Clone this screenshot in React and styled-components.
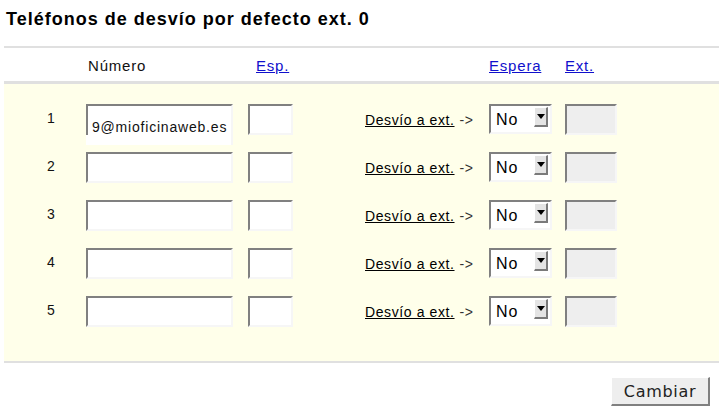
import React from 'react';
import styled, { createGlobalStyle } from 'styled-components';

const GlobalStyle = createGlobalStyle`
    body {
        margin: 0;
        background: #fff;
        font-family: "Liberation Sans", Arial, sans-serif;
        color: #111;
    }
`;

const Page = styled.div`
    width: 715px;
    padding-left: 4px;
`;

const Title = styled.h1`
    margin: 0;
    padding: 8px 0 0 2px;
    height: 46px;
    box-sizing: border-box;
    font-size: 18px;
    font-weight: bold;
    letter-spacing: 1px;
    line-height: 22px;
    color: #000;
`;

const Grid = styled.div`
    display: grid;
    grid-template-columns: 82px 162px 117px 124px 76px 52px;
    align-items: center;
`;

const HeaderRow = styled(Grid)`
    border-top: 2px solid #e0e0e0;
    border-bottom: 3px solid #e0e0e0;
    height: 31px;
    padding-top: 2px;
    font-size: 15px;
    letter-spacing: 0.8px;
`;

const HeadCell = styled.div`
    padding-left: ${p => p.$indent || 0}px;
`;

const HeadLink = styled.a`
    color: #1010cc;
    text-decoration: underline;
    cursor: pointer;
`;

const Body = styled(Grid)`
    background: #ffffea;
    padding: 20px 0 34px;
    grid-auto-rows: 31px;
    row-gap: 17px;
    align-items: start;
    border-bottom: 2px solid #e0e0e0;
`;

const Num = styled.div`
    align-self: center;
    padding-left: 12px;
    text-align: center;
    font-size: 14px;
    margin-top: -3px;
`;

const TextInput = styled.input`
    box-sizing: border-box;
    width: ${p => p.$w}px;
    height: ${p => (p.$tall ? 41 : 31)}px;
    margin: 0;
    padding: 0 4px;
    font-family: "Liberation Sans", Arial, sans-serif;
    font-size: 14px;
    letter-spacing: 0.8px;
    color: #111;
    background: ${p => (p.disabled ? '#eeeeee' : '#fff')};
    border-style: solid;
    border-width: 2px;
    border-color: #808080 #f6f6f6 #f6f6f6 #808080;
    outline: none;
    ${p => p.$tall && `
        border-left: none;
        border-bottom: none;
        padding-left: 6px;
        padding-top: 2px;
        background: linear-gradient(#808080, #808080) left top / 2px 29px no-repeat, #fff;
    `}
`;

const Desvio = styled.div`
    align-self: center;
    font-size: 14px;
    letter-spacing: 0.6px;
    white-space: nowrap;
    color: #333;
`;

const DesvioLink = styled.a`
    color: #000;
    text-decoration: underline;
    margin-right: 5px;
    cursor: pointer;
`;

const SelectBox = styled.div`
    position: relative;
    box-sizing: border-box;
    width: 63px;
    height: 30px;
    background: #fff;
    border-style: solid;
    border-width: 2px;
    border-color: #808080 #f6f6f6 #f6f6f6 #808080;
`;

const Select = styled.select`
    appearance: none;
    width: 100%;
    height: 100%;
    border: none;
    background: transparent;
    padding: 0 0 0 5px;
    margin: 0;
    font-family: "Liberation Sans", Arial, sans-serif;
    font-size: 16px;
    letter-spacing: 1px;
    color: #000;
    outline: none;
`;

const Arrow = styled.span`
    position: absolute;
    right: 2px;
    top: 1px;
    width: 14px;
    height: 20px;
    box-sizing: border-box;
    background: #e4e4e4;
    border-style: solid;
    border-width: 1px 2px 2px 1px;
    border-color: #fff #7a7a7a #7a7a7a #fff;
    display: flex;
    align-items: center;
    justify-content: center;
    pointer-events: none;
`;

const Footer = styled.div`
    display: flex;
    justify-content: flex-end;
    padding: 14px 9px 0 0;
`;

const Button = styled.button`
    width: 99px;
    height: 29px;
    margin: 0;
    background: #eeeeee;
    border-style: solid;
    border-width: 1px 2px 2px 1px;
    border-color: #fff #808080 #808080 #fff;
    font-family: "DejaVu Sans", sans-serif;
    font-size: 16px;
    letter-spacing: 0.7px;
    color: #222;
    cursor: pointer;
`;

const rows = [
    { n: 1, numero: '9@mioficinaweb.es' },
    { n: 2, numero: '' },
    { n: 3, numero: '' },
    { n: 4, numero: '' },
    { n: 5, numero: '' },
];

const App = () => {
    return (
        <>
            <GlobalStyle />
            <Page>
                <Title>Teléfonos de desvío por defecto ext. 0</Title>
                <HeaderRow>
                    <div />
                    <HeadCell $indent={2}>Número</HeadCell>
                    <HeadCell $indent={8}><HeadLink>Esp.</HeadLink></HeadCell>
                    <div />
                    <HeadCell><HeadLink>Espera</HeadLink></HeadCell>
                    <HeadCell><HeadLink>Ext.</HeadLink></HeadCell>
                </HeaderRow>
                <Body>
                    {rows.map(r => (
                        <React.Fragment key={r.n}>
                            <Num>{r.n}</Num>
                            <TextInput $w={147} $tall={r.n === 1} defaultValue={r.numero} />
                            <TextInput $w={45} />
                            <Desvio><DesvioLink>Desvío a ext.</DesvioLink>-&gt;</Desvio>
                            <SelectBox>
                                <Select defaultValue="No">
                                    <option>No</option>
                                    <option>Sí</option>
                                </Select>
                                <Arrow>
                                    <svg width="8" height="5" viewBox="0 0 8 5">
                                        <path d="M0 0h8L4 5z" fill="#000" />
                                    </svg>
                                </Arrow>
                            </SelectBox>
                            <TextInput $w={52} disabled />
                        </React.Fragment>
                    ))}
                </Body>
                <Footer>
                    <Button>Cambiar</Button>
                </Footer>
            </Page>
        </>
    );
};

export default App;
